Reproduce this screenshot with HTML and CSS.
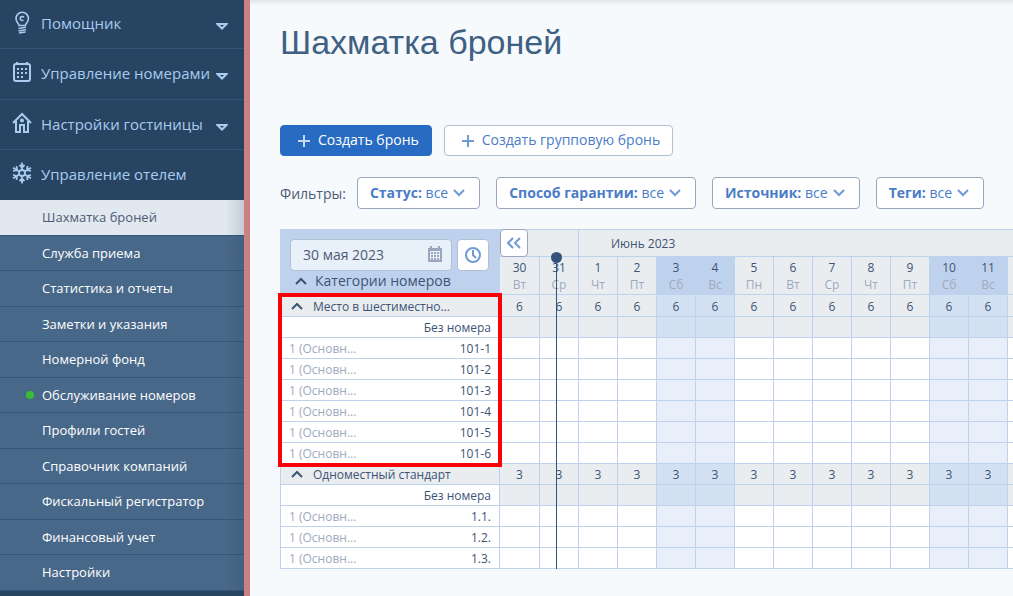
FILE: index.html
```html
<!DOCTYPE html>
<html lang="ru">
<head>
<meta charset="utf-8">
<title>Шахматка броней</title>
<link rel="stylesheet" href="styles.css">
</head>
<body>
<div class="app">
<nav class="sidebar">
  <ul class="menu">
    <li><a class="menu-item" href="#">
      <svg class="menu-icon" width="22" height="24" viewBox="0 0 22 24" fill="none" stroke="currentColor" stroke-width="1.6"><path d="M8 14.500c0-2-3-3-3-7a6.200 6.200 0 0 1 12.400 0c0 4-3 5-3 7z"/><path d="M13 6.500a2 2 0 1 0-.5 2.500M7.500 17.500l7.500-1.200M7.500 20l7.500-1.200M8 22l6.500-1" stroke-width="1.600"/></svg>
      <span>Помощник</span><svg class="caret" width="12" height="8" viewBox="0 0 12 8"><path fill="currentColor" fill-rule="evenodd" d="M0 0h12v1L6 7 0 1zM4 2l2 2 2-2z"/></svg></a></li>
    <li><a class="menu-item" href="#">
      <svg class="menu-icon" width="22" height="24" viewBox="0 0 22 24" fill="none" stroke="currentColor" stroke-width="2"><rect x="3" y="3" width="16" height="17" rx="2"/><path d="M6 1v3M16 1v3"/><path d="M6 8h11M6 12h11M6 16h7" stroke-dasharray="2 2"/></svg>
      <span>Управление номерами</span><svg class="caret" width="12" height="8" viewBox="0 0 12 8"><path fill="currentColor" fill-rule="evenodd" d="M0 0h12v1L6 7 0 1zM4 2l2 2 2-2z"/></svg></a></li>
    <li><a class="menu-item" href="#">
      <svg class="menu-icon" width="22" height="24" viewBox="0 0 22 24" fill="none" stroke="currentColor" stroke-width="2"><path d="M2 11l9-9 9 9M5 9v11h4v-7h4v7h4V9"/><circle cx="11" cy="8.500" r="2" fill="currentColor" stroke="none"/></svg>
      <span>Настройки гостиницы</span><svg class="caret" width="12" height="8" viewBox="0 0 12 8"><path fill="currentColor" fill-rule="evenodd" d="M0 0h12v1L6 7 0 1zM4 2l2 2 2-2z"/></svg></a></li>
    <li><a class="menu-item" href="#">
      <svg class="menu-icon" width="22" height="24" viewBox="0 0 22 24" fill="none" stroke="currentColor" stroke-width="1.800"><circle cx="11" cy="11" r="3"/><path d="M11 .5V8M11 14v7.500M2 5.800l6.300 3.700M13.700 12.500l6.300 3.700M20 5.800L13.700 9.500M8.300 12.500L2 16.200M8.500 3L11 5.500 13.500 3M8.500 19l2.500-2.500 2.500 2.500M5.500 4l.5 4-4 1M16.500 4l-.5 4 4 1M5.500 18l.5-4-4-1M16.500 18l-.5-4 4-1"/></svg>
      <span>Управление отелем</span></a></li>
  </ul>
  <ul class="submenu">
    <li><a class="sub-item active" href="#">Шахматка броней</a></li>
    <li><a class="sub-item" href="#">Служба приема</a></li>
    <li><a class="sub-item" href="#">Статистика и отчеты</a></li>
    <li><a class="sub-item" href="#">Заметки и указания</a></li>
    <li><a class="sub-item" href="#">Номерной фонд</a></li>
    <li><a class="sub-item online" href="#">Обслуживание номеров</a></li>
    <li><a class="sub-item" href="#">Профили гостей</a></li>
    <li><a class="sub-item" href="#">Справочник компаний</a></li>
    <li><a class="sub-item" href="#">Фискальный регистратор</a></li>
    <li><a class="sub-item" href="#">Финансовый учет</a></li>
    <li><a class="sub-item" href="#">Настройки</a></li>
  </ul>
</nav>
<main class="content">
  <h1 class="title">Шахматка броней</h1>
  <div class="actions">
    <button class="btn btn-primary" type="button"><svg width="12" height="12" viewBox="0 0 12 12" stroke="currentColor" stroke-width="2"><path d="M6 0v12M0 6h12"/></svg>Создать бронь</button>
    <button class="btn btn-outline" type="button"><svg width="12" height="12" viewBox="0 0 12 12" stroke="currentColor" stroke-width="2"><path d="M6 0v12M0 6h12"/></svg>Создать групповую бронь</button>
  </div>
  <div class="filters">
    <span class="filters-label">Фильтры:</span>
    <button class="filter" type="button"><span><b>Статус:</b> все</span><svg width="12" height="8" viewBox="0 0 12 8" fill="none" stroke="currentColor" stroke-width="2"><path d="M1 1l5 5 5-5"/></svg></button>
    <button class="filter" type="button"><span><b>Способ гарантии:</b> все</span><svg width="12" height="8" viewBox="0 0 12 8" fill="none" stroke="currentColor" stroke-width="2"><path d="M1 1l5 5 5-5"/></svg></button>
    <button class="filter" type="button"><span><b>Источник:</b> все</span><svg width="12" height="8" viewBox="0 0 12 8" fill="none" stroke="currentColor" stroke-width="2"><path d="M1 1l5 5 5-5"/></svg></button>
    <button class="filter" type="button"><span><b>Теги:</b> все</span><svg width="12" height="8" viewBox="0 0 12 8" fill="none" stroke="currentColor" stroke-width="2"><path d="M1 1l5 5 5-5"/></svg></button>
  </div>
  <div class="board">
    <table class="grid">
      <colgroup><col class="col-room"><col class="col-first"><col span="13" class="col-day"></colgroup>
      <thead>
        <tr class="months">
          <th class="corner" rowspan="2">
            <div class="date-row">
              <label class="date-field"><input type="text" value="30 мая 2023" aria-label="Дата"><svg width="14" height="16" viewBox="0 0 14 16"><path fill="currentColor" fill-rule="evenodd" d="M2 0h2v2h6V0h2v2h2v14H0V2h2zM2 5v9h10V5z"/><path fill="none" stroke="currentColor" stroke-width="2" stroke-dasharray="2 1" d="M3 7h8M3 10h8M3 13h8"/></svg></label>
              <button class="clock" type="button" aria-label="Сегодня"><svg width="18" height="18" viewBox="0 0 18 18" fill="none" stroke="currentColor" stroke-width="2"><circle cx="9" cy="9" r="7"/><path d="M9 4v5l3 3"/></svg></button>
            </div>
            <div class="corner-title"><svg width="12" height="8" viewBox="0 0 12 8" fill="none" stroke="currentColor" stroke-width="2"><path d="M1 7l5-5 5 5"/></svg>Категории номеров</div>
          </th>
          <th class="nav-cell" colspan="2"><button class="back" type="button" aria-label="Назад"><svg width="14" height="12" viewBox="0 0 14 12" fill="none" stroke="currentColor" stroke-width="2"><path d="M6 1L1 6l5 5M13 1L8 6l5 5"/></svg></button></th>
          <th class="month" colspan="12">Июнь 2023</th>
        </tr>
        <tr class="days">
          <th>30<small>Вт</small></th><th>31<small>Ср</small></th><th>1<small>Чт</small></th><th>2<small>Пт</small></th><th class="weekend">3<small>Сб</small></th><th class="weekend">4<small>Вс</small></th><th>5<small>Пн</small></th><th>6<small>Вт</small></th><th>7<small>Ср</small></th><th>8<small>Чт</small></th><th>9<small>Пт</small></th><th class="weekend">10<small>Сб</small></th><th class="weekend">11<small>Вс</small></th><th></th>
        </tr>
      </thead>
      <tbody class="group">
        <tr class="category"><th><div class="cat-name"><svg width="12" height="8" viewBox="0 0 12 8" fill="none" stroke="currentColor" stroke-width="2"><path d="M1 7l5-5 5 5"/></svg>Место в шестиместно...</div><div class="selection"></div></th><td>6</td><td>6</td><td>6</td><td>6</td><td>6</td><td>6</td><td>6</td><td>6</td><td>6</td><td>6</td><td>6</td><td>6</td><td>6</td><td></td></tr>
        <tr class="unassigned"><th><div class="room"><span>Без номера</span></div></th><td></td><td></td><td></td><td></td><td></td><td></td><td></td><td></td><td></td><td></td><td></td><td></td><td></td><td></td></tr>
        <tr><th><div class="room"><i>1 (Основн...</i><span>101-1</span></div></th><td></td><td></td><td></td><td></td><td></td><td></td><td></td><td></td><td></td><td></td><td></td><td></td><td></td><td></td></tr>
        <tr><th><div class="room"><i>1 (Основн...</i><span>101-2</span></div></th><td></td><td></td><td></td><td></td><td></td><td></td><td></td><td></td><td></td><td></td><td></td><td></td><td></td><td></td></tr>
        <tr><th><div class="room"><i>1 (Основн...</i><span>101-3</span></div></th><td></td><td></td><td></td><td></td><td></td><td></td><td></td><td></td><td></td><td></td><td></td><td></td><td></td><td></td></tr>
        <tr><th><div class="room"><i>1 (Основн...</i><span>101-4</span></div></th><td></td><td></td><td></td><td></td><td></td><td></td><td></td><td></td><td></td><td></td><td></td><td></td><td></td><td></td></tr>
        <tr><th><div class="room"><i>1 (Основн...</i><span>101-5</span></div></th><td></td><td></td><td></td><td></td><td></td><td></td><td></td><td></td><td></td><td></td><td></td><td></td><td></td><td></td></tr>
        <tr><th><div class="room"><i>1 (Основн...</i><span>101-6</span></div></th><td></td><td></td><td></td><td></td><td></td><td></td><td></td><td></td><td></td><td></td><td></td><td></td><td></td><td></td></tr>
      </tbody>
      <tbody>
        <tr class="category"><th><div class="cat-name"><svg width="12" height="8" viewBox="0 0 12 8" fill="none" stroke="currentColor" stroke-width="2"><path d="M1 7l5-5 5 5"/></svg>Одноместный стандарт</div></th><td>3</td><td>3</td><td>3</td><td>3</td><td>3</td><td>3</td><td>3</td><td>3</td><td>3</td><td>3</td><td>3</td><td>3</td><td>3</td><td></td></tr>
        <tr class="unassigned"><th><div class="room"><span>Без номера</span></div></th><td></td><td></td><td></td><td></td><td></td><td></td><td></td><td></td><td></td><td></td><td></td><td></td><td></td><td></td></tr>
        <tr><th><div class="room"><i>1 (Основн...</i><span>1.1.</span></div></th><td></td><td></td><td></td><td></td><td></td><td></td><td></td><td></td><td></td><td></td><td></td><td></td><td></td><td></td></tr>
        <tr><th><div class="room"><i>1 (Основн...</i><span>1.2.</span></div></th><td></td><td></td><td></td><td></td><td></td><td></td><td></td><td></td><td></td><td></td><td></td><td></td><td></td><td></td></tr>
        <tr><th><div class="room"><i>1 (Основн...</i><span>1.3.</span></div></th><td></td><td></td><td></td><td></td><td></td><td></td><td></td><td></td><td></td><td></td><td></td><td></td><td></td><td></td></tr>
      </tbody>
    </table>
    <div class="now"></div>
  </div>
</main>
</div>
</body>
</html>
```
FILE: styles.css
```css
* { box-sizing: border-box; }
body {
  margin: 0;
  background: #f7fafd;
  color: #3e5475;
  font-family: "Open Sans", "Noto Sans", sans-serif;
  font-size: 14px;
}
ul { list-style: none; margin: 0; padding: 0; }
a { text-decoration: none; color: inherit; }
button, input { font: inherit; color: inherit; margin: 0; }
svg { display: block; flex: none; }

.app { display: flex; min-height: 100vh; }

/* Sidebar */
.sidebar {
  position: relative;
  flex: none;
  width: 250px;
  background: #274463;
  border-right: 6px solid #ca8181;
}
.sidebar::after {
  content: "";
  position: absolute;
  top: 0;
  right: 0;
  bottom: 0;
  width: 18px;
  background: linear-gradient(to right, rgba(40, 60, 80, 0), rgba(40, 60, 80, 0.16));
  pointer-events: none;
}
.menu-item {
  display: flex;
  align-items: center;
  gap: 8px;
  height: 50px;
  padding: 0 16px 2px 11px;
  border-bottom: 1px solid #345779;
  color: #a9cbee;
  font-size: 15px;
  white-space: nowrap;
}
.menu-item span { flex: 1; min-width: 0; }
.menu li:nth-child(2) .menu-item { height: 51px; }
.menu li:first-child .menu-item { height: 49px; }
.menu li:last-child .menu-item { border-bottom-color: #274463; }
.caret { margin: 8px 0 0 -8px; }
.sub-item {
  position: relative;
  display: flex;
  align-items: center;
  height: 36px;
  padding: 0 0 1px 42px;
  background: #486889;
  border-bottom: 1px solid #345779;
  color: #fff;
  font-size: 13px;
  font-weight: 500;
}
.submenu li:nth-child(even) .sub-item { height: 35px; }
.sub-item.active { background: #e1e8f0; color: #4d5b74; font-weight: 400; }
.online::before {
  content: "";
  position: absolute;
  left: 26px;
  width: 8px;
  height: 8px;
  border-radius: 50%;
  background: #3bbb33;
}

/* Content */
.content {
  flex: 1;
  min-width: 0;
  overflow: hidden;
  padding: 20px 0 20px 30px;
  background: linear-gradient(#e2e6e9, #f7fafd 6px);
}
.title {
  margin: 0;
  color: #3e6083;
  font-family: "Liberation Sans", Arial, sans-serif;
  font-size: 34px;
  font-weight: 400;
  line-height: 45px;
}
.actions { display: flex; gap: 12px; margin-top: 60px; }
.btn {
  display: flex;
  align-items: center;
  gap: 8px;
  height: 31px;
  padding: 0 12px 2px 17px;
  border: 1px solid #b2c0d2;
  border-radius: 4px;
  background: #fff;
  color: #4a7cc7;
  white-space: nowrap;
}
.btn svg { margin-top: 3px; color: #6e9bd5; }
.btn-primary { border-color: #286bc3; background: #286bc3; color: #fff; font-weight: 500; }
.btn-primary svg { color: #c3d8f3; }
.filters { display: flex; align-items: center; gap: 16px; margin-top: 21px; white-space: nowrap; }
.filters-label { margin-right: -5px; color: #4d5b74; }
.filter {
  display: flex;
  align-items: center;
  gap: 5px;
  height: 32px;
  padding: 0 14px 1px 12px;
  border: 1px solid #9aa6bd;
  border-radius: 4px;
  background: #fff;
  color: #4a7cc7;
}
.filter svg { color: #6e9bd5; }

/* Booking board */
.board { position: relative; margin-top: 20px; }
.grid {
  width: 767px;
  table-layout: fixed;
  border-collapse: separate;
  border-spacing: 0;
  border-top: 1px solid #bed2ed;
  border-left: 1px solid #bed2ed;
  font-size: 12px;
  line-height: 16px;
}
.col-room { width: 219px; }
.col-first { width: 40px; }
.col-day { width: 39px; }
.grid th, .grid td {
  height: 21px;
  padding: 2px 0 0;
  border-right: 1px solid #bed2ed;
  border-bottom: 1px solid #bed2ed;
  background: #fff;
  font-weight: 400;
  text-align: center;
}
.grid .months th, .grid .days th { background: #e9edf0; }
.grid .months th { height: 27px; padding: 0; vertical-align: top; }
.grid .days th { height: 38px; color: #3e5475; }
.grid .months .month { padding: 6px 0 0 32px; text-align: left; }
.days small { display: block; margin-top: 1px; color: #9eaabd; font-size: 12px; }
.grid .days .weekend { background: #bed2ed; }
.grid .months .corner { background: #bed2ed; text-align: left; }
.date-row { display: flex; gap: 5px; padding: 9px 10px 0 9px; }
.date-field {
  display: flex;
  align-items: center;
  flex: 1;
  min-width: 0;
  height: 32px;
  padding: 0 9px 0 12px;
  border: 1px solid #b2c0d2;
  border-radius: 4px;
  background: #e8f0f9;
  color: #9aa6bd;
}
.date-field svg { margin-bottom: 3px; }
.date-field input {
  flex: 1;
  min-width: 0;
  padding: 0;
  border: 0;
  outline: 0;
  background: none;
  color: #4d5b74;
  font-size: 14px;
}
.clock {
  display: flex;
  align-items: center;
  justify-content: center;
  width: 32px;
  height: 32px;
  padding: 0;
  border: 1px solid #b2c0d2;
  border-radius: 4px;
  background: #fff;
  color: #6e9bd5;
}
.corner-title { display: flex; align-items: center; gap: 8px; padding-left: 14px; font-size: 14px; line-height: 20px; }
.grid .months .nav-cell { position: relative; }
.back {
  position: absolute;
  top: -1px;
  left: 0;
  display: flex;
  align-items: center;
  justify-content: center;
  width: 28px;
  height: 28px;
  padding: 0;
  border: 1px solid #9aa6bd;
  border-radius: 4px;
  background: #fff;
  color: #6e9bd5;
}
.grid td:nth-child(6), .grid td:nth-child(7),
.grid td:nth-child(13), .grid td:nth-child(14) { background: #e8effa; }
.grid .category th, .grid .category td, .grid .unassigned td { background: #e9edf0; }
.grid .group .category th, .grid .group .category td { height: 22px; }
.grid .category td:nth-child(6), .grid .category td:nth-child(7),
.grid .category td:nth-child(13), .grid .category td:nth-child(14),
.grid .unassigned td:nth-child(6), .grid .unassigned td:nth-child(7),
.grid .unassigned td:nth-child(13), .grid .unassigned td:nth-child(14) { background: #d4e1f3; }
.cat-name { display: flex; align-items: center; gap: 10px; padding-left: 10px; }
.cat-name svg { margin-bottom: 2px; }
.room { display: flex; justify-content: space-between; padding: 0 8px; }
.room i { color: #9eaabd; font-style: normal; }
.room span { margin-left: auto; }
.group { position: relative; }
.selection {
  position: absolute;
  inset: -2px auto -3px -3px;
  width: 224px;
  border: 4px solid #fb0007;
  pointer-events: none;
}
.now {
  position: absolute;
  top: 28px;
  bottom: 0;
  left: 276px;
  width: 1px;
  background: #34527a;
}
.now::before {
  content: "";
  position: absolute;
  top: -5px;
  left: -5px;
  width: 11px;
  height: 11px;
  border-radius: 50%;
  background: #34527a;
}
```
